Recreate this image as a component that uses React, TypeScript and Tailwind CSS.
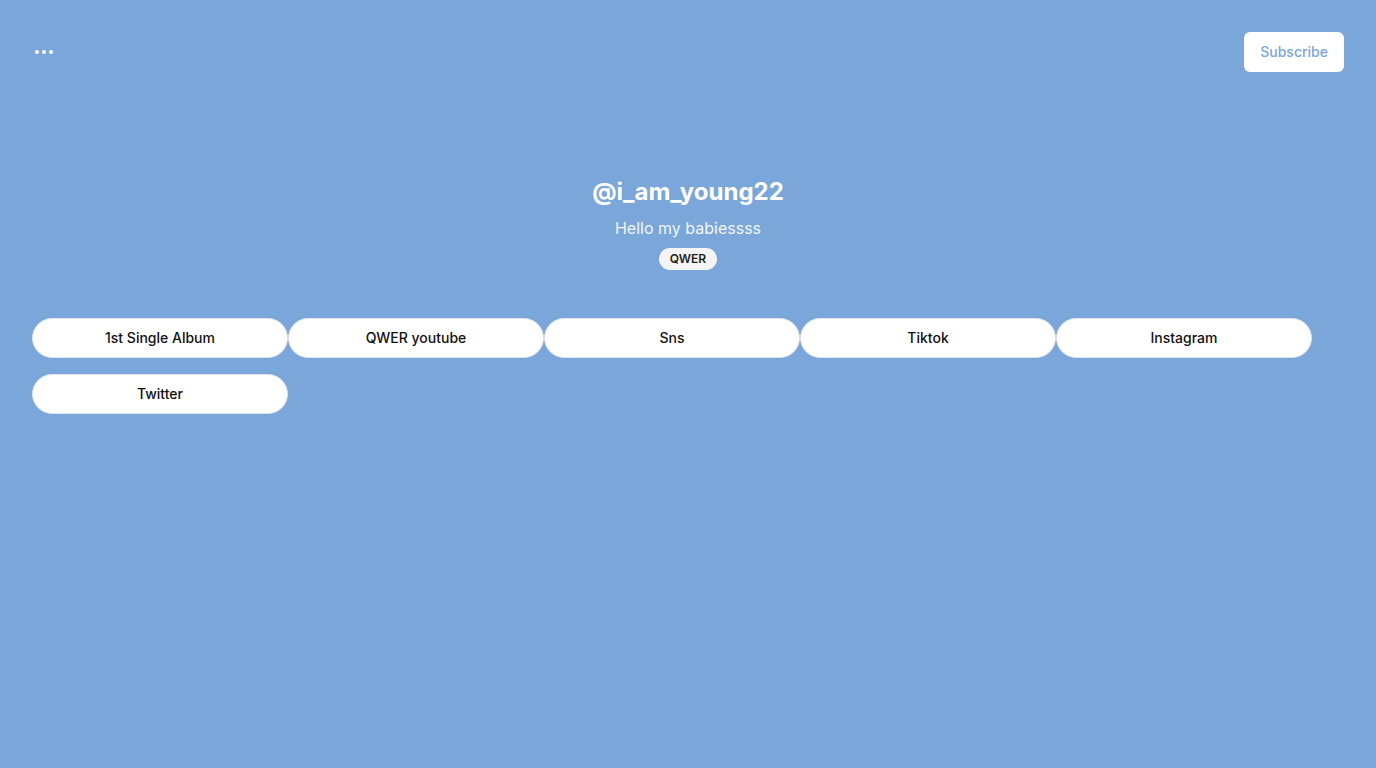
const LINKS = ['1st Single Album', 'QWER youtube', 'Sns', 'Tiktok', 'Instagram', 'Twitter'];

export default function App() {
  return (
    <div className="min-h-screen w-full bg-[#7ba6d9] px-8 pt-8 font-['Inter',sans-serif]">
      {/* Top bar */}
      <div className="flex items-center justify-between">
        <button className="flex h-10 items-center gap-[3px] pl-[3px]">
          <span className="h-1 w-1 rounded-full bg-white" />
          <span className="h-1 w-1 rounded-full bg-white" />
          <span className="h-1 w-1 rounded-full bg-white" />
        </button>
        <button className="h-10 rounded-md bg-white px-4 text-sm font-medium text-[#7ba6d9]">
          Subscribe
        </button>
      </div>

      {/* Profile */}
      <div className="mt-[102px] flex flex-col items-center">
        <h1 className="text-[24px] font-bold leading-9 text-white">@i_am_young22</h1>
        <p className="mt-1.5 text-[16px] leading-6 text-[#f0f5fb]">Hello my babiessss</p>
        <span className="mt-2 rounded-full bg-[#f4f4f5] px-[11px] py-[3px] text-[12px] font-semibold leading-4 text-[#1f1f1f]">
          QWER
        </span>
      </div>

      {/* Links */}
      <div className="mt-[48px] flex flex-wrap gap-y-4">
        {LINKS.map((label) => (
          <button
            key={label}
            className="h-10 w-64 rounded-full border border-[#dfe3ea] bg-white text-sm font-medium text-[#111]"
          >
            {label}
          </button>
        ))}
      </div>
    </div>
  );
}
